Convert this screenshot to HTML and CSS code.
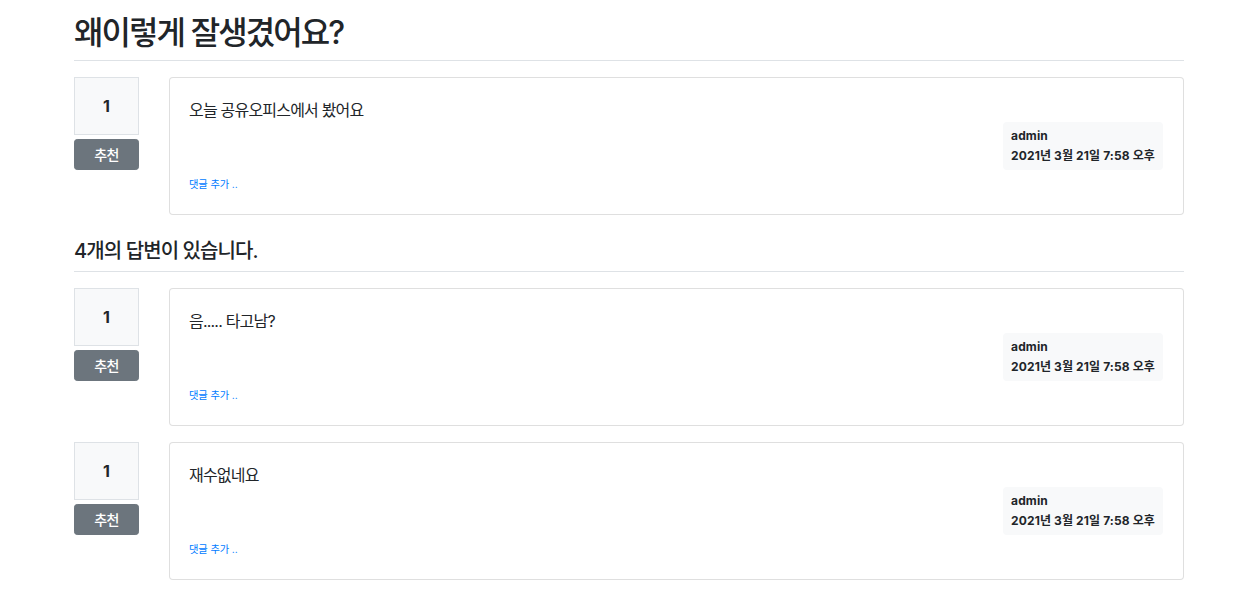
FILE: index.html
```html
<!DOCTYPE html>
<html lang="ko">
<head>
<meta charset="utf-8">
<title>pybo</title>
<link rel="stylesheet" href="styles.css">
</head>
<body>
<div class="container">
  <h2 class="title">왜이렇게 잘생겼어요?</h2>

  <div class="row">
    <div class="vote-col">
      <div class="vote-count">1</div>
      <a class="vote-btn" href="#">추천</a>
    </div>
    <div class="main-col">
      <div class="card">
        <div class="card-text">오늘 공유오피스에서 봤어요</div>
        <div class="meta-wrap">
          <div class="meta">
            <div class="meta-name">admin</div>
            <div>2021년 3월 21일 7:58 오후</div>
          </div>
        </div>
        <div class="comment-row"><a class="comment-link" href="#">댓글 추가 ..</a></div>
      </div>
    </div>
  </div>

  <h5 class="subtitle">4개의 답변이 있습니다.</h5>

  <div class="row">
    <div class="vote-col">
      <div class="vote-count">1</div>
      <a class="vote-btn" href="#">추천</a>
    </div>
    <div class="main-col">
      <div class="card">
        <div class="card-text">음..... 타고남?</div>
        <div class="meta-wrap">
          <div class="meta">
            <div class="meta-name">admin</div>
            <div>2021년 3월 21일 7:58 오후</div>
          </div>
        </div>
        <div class="comment-row"><a class="comment-link" href="#">댓글 추가 ..</a></div>
      </div>
    </div>
  </div>

  <div class="row">
    <div class="vote-col">
      <div class="vote-count">1</div>
      <a class="vote-btn" href="#">추천</a>
    </div>
    <div class="main-col">
      <div class="card">
        <div class="card-text">재수없네요</div>
        <div class="meta-wrap">
          <div class="meta">
            <div class="meta-name">admin</div>
            <div>2021년 3월 21일 7:58 오후</div>
          </div>
        </div>
        <div class="comment-row"><a class="comment-link" href="#">댓글 추가 ..</a></div>
      </div>
    </div>
  </div>
</div>
</body>
</html>
```

FILE: styles.css
```css
* { box-sizing: border-box; }
html, body { margin: 0; padding: 0; background: #fff; }
body {
  font-family: Inter, "Noto Sans CJK KR", sans-serif;
  font-size: 16px;
  line-height: 1.5;
  color: #212529;
}
.container {
  width: 1110px;
  margin-left: 74px;
  padding-top: 6px;
}
.title {
  margin: 0 0 16px 0;
  padding: 8px 0;
  font-size: 32px;
  font-weight: 500;
  line-height: 1.2;
  border-bottom: 1px solid #dee2e6;
  letter-spacing: -0.06em;
}
.subtitle {
  margin: 16px 0;
  padding: 8px 0;
  font-size: 20px;
  font-weight: 500;
  line-height: 1.2;
  border-bottom: 1px solid #dee2e6;
  letter-spacing: -0.045em;
}
.row {
  display: flex;
  gap: 30px;
  margin: 16px 0;
}
.vote-col {
  width: 65px;
  flex: none;
}
.vote-count {
  background: #f8f9fa;
  border: 1px solid #dee2e6;
  padding: 16px;
  text-align: center;
  font-weight: 700;
  line-height: 24px;
  margin-bottom: 4px;
}
.vote-btn {
  display: block;
  height: 31px;
  background: #6c757d;
  border: 1px solid #6c757d;
  border-radius: 3.2px;
  color: #fff;
  text-decoration: none;
  text-align: center;
  font-size: 14px;
  line-height: 21px;
  padding: 4px 8px;
  font-weight: 500;
  letter-spacing: -0.04em;
}
.main-col {
  flex: 1;
  min-width: 0;
}
.card {
  border: 1px solid rgba(0,0,0,.125);
  border-radius: 4px;
  padding: 20px 20px 20px 19px;
  background: #fff;
}
.card-text {
  line-height: 24px;
  white-space: pre-line;
  letter-spacing: -0.05em;
}
.meta-wrap {
  display: flex;
  justify-content: flex-end;
}
.meta {
  background: #f8f9fa;
  border-radius: 4px;
  padding: 8px;
  font-size: 12px;
  font-weight: 700;
  line-height: 1;
  letter-spacing: 0.01em;
}
.meta-name { margin-bottom: 8px; }
.comment-row {
  line-height: 24px;
  height: 24px;
}
.comment-link {
  color: #007bff;
  text-decoration: none;
  font-size: 10.24px;
  letter-spacing: -0.01em;
}
```
